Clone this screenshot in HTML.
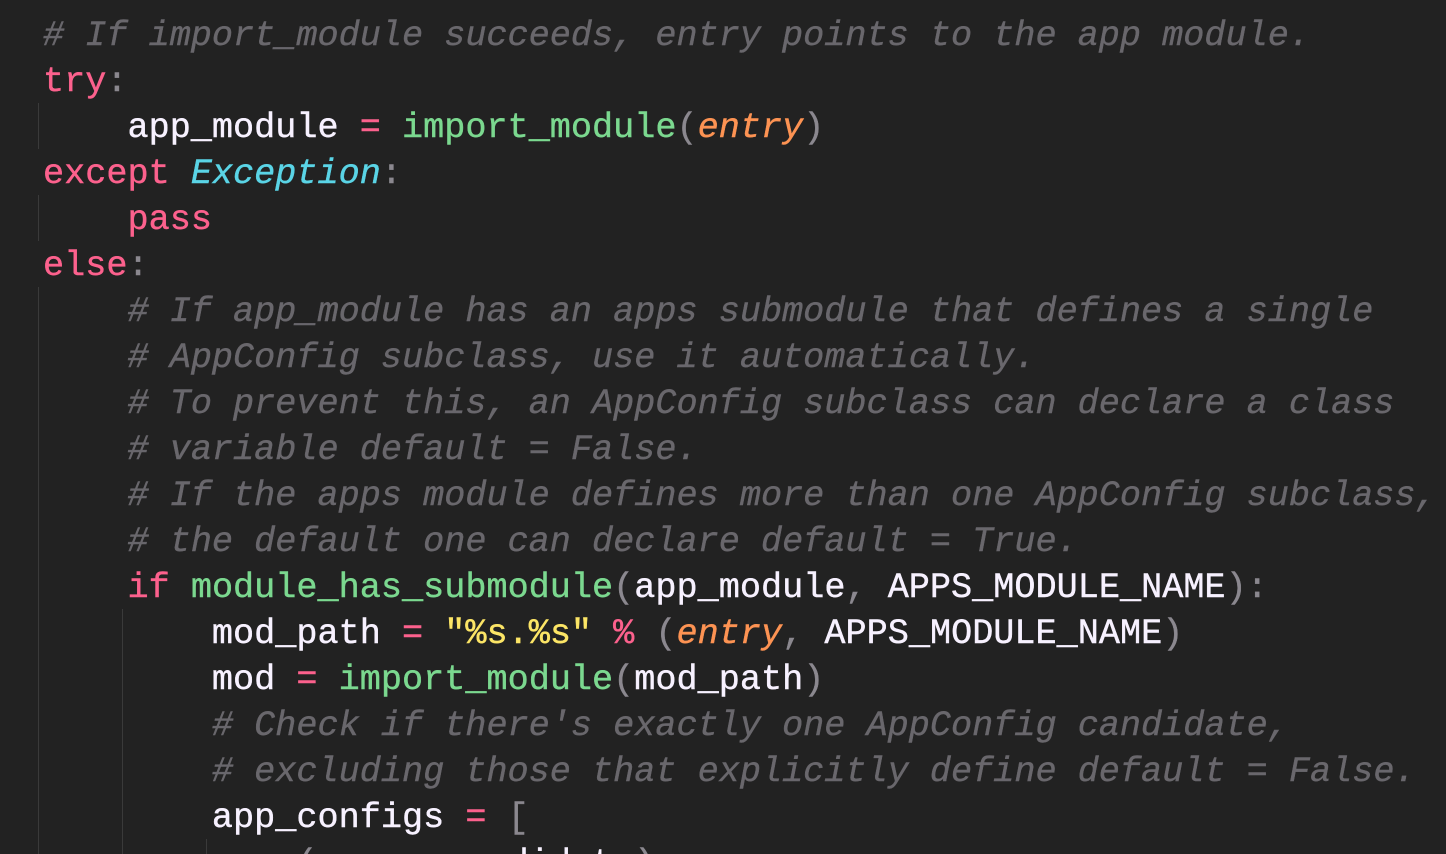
<!DOCTYPE html>
<html><head><meta charset="utf-8"><style>
html,body{margin:0;padding:0;background:#222222;width:1446px;height:854px;overflow:hidden}
pre{margin:0;padding:13px 0 0 43px;font-family:"Liberation Mono",monospace;font-size:35.2px;line-height:46px;color:#f7f1ff;white-space:pre;-webkit-text-stroke:0.4px currentColor}
.c{color:#69676c;font-style:italic}.k{color:#fc618d}.f{color:#7bd88f}.t{color:#5ad4e6;font-style:italic}
.p{color:#fd9353;font-style:italic}.s{color:#fce566}.u{color:#8b888f}
.g{position:absolute;width:1px;background:#3a3a3a}
</style></head><body>
<div class="g" style="left:38px;top:103px;height:46px"></div>
<div class="g" style="left:38px;top:195px;height:46px"></div>
<div class="g" style="left:38px;top:287px;height:567px"></div>
<div class="g" style="left:122px;top:609px;height:245px"></div>
<div class="g" style="left:206px;top:839px;height:15px"></div>
<pre><span class="c"># If import_module succeeds, entry points to the app module.</span>
<span class="k">try</span><span class="u">:</span>
    app_module <span class="k">=</span> <span class="f">import_module</span><span class="u">(</span><span class="p">entry</span><span class="u">)</span>
<span class="k">except</span> <span class="t">Exception</span><span class="u">:</span>
    <span class="k">pass</span>
<span class="k">else</span><span class="u">:</span>
    <span class="c"># If app_module has an apps submodule that defines a single</span>
    <span class="c"># AppConfig subclass, use it automatically.</span>
    <span class="c"># To prevent this, an AppConfig subclass can declare a class</span>
    <span class="c"># variable default = False.</span>
    <span class="c"># If the apps module defines more than one AppConfig subclass,</span>
    <span class="c"># the default one can declare default = True.</span>
    <span class="k">if</span> <span class="f">module_has_submodule</span><span class="u">(</span>app_module<span class="u">,</span> APPS_MODULE_NAME<span class="u">):</span>
        mod_path <span class="k">=</span> <span class="s">"%s.%s"</span> <span class="k">%</span> <span class="u">(</span><span class="p">entry</span><span class="u">,</span> APPS_MODULE_NAME<span class="u">)</span>
        mod <span class="k">=</span> <span class="f">import_module</span><span class="u">(</span>mod_path<span class="u">)</span>
        <span class="c"># Check if there's exactly one AppConfig candidate,</span>
        <span class="c"># excluding those that explicitly define default = False.</span>
        app_configs <span class="k">=</span> <span class="u">[</span>
            <span class="u">(</span>name<span class="u">,</span> candidate<span class="u">)</span>
</pre>
</body></html>
